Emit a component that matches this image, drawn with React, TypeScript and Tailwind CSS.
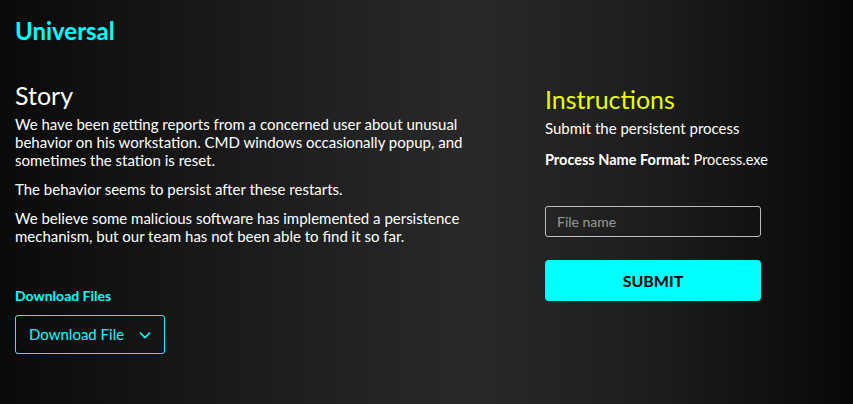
import React from "react";

const App = () => {
  return (
    <div
      className="w-[853px] h-[404px] overflow-hidden bg-[linear-gradient(90deg,#0a0a0a_0%,#1c1c1c_30%,#292929_55%,#1e1e1e_75%,#080808_100%)] text-white px-[15px] pt-[16px]"
      style={{ fontFamily: "Lato, 'Open Sans', sans-serif" }}
    >
      <h1 className="text-[24px] font-bold leading-[30px] text-[#00ffff]">Universal</h1>

      <div className="flex mt-[34px]">
        {/* story */}
        <div className="w-[530px] pr-[60px]">
          <h2 className="text-[25px] leading-[30px]">Story</h2>
          <div className="text-[15px] leading-[18px] mt-[5px]">
            <p>
              We have been getting reports from a concerned user about unusual behavior on his workstation. CMD windows
              occasionally popup, and sometimes the station is reset.
            </p>
            <p className="mt-[11px]">The behavior seems to persist after these restarts.</p>
            <p className="mt-[11px]">
              We believe some malicious software has implemented a persistence mechanism, but our team has not been
              able to find it so far.
            </p>
          </div>

          <h3 className="mt-[42px] text-[14px] font-bold text-[#00ffff] leading-[18px]">Download Files</h3>
          <button className="mt-[10px] w-[150px] h-[39px] border border-[#00ffff] rounded-[3px] flex items-center justify-between pl-[13px] pr-[11px] text-[#00ffff] text-[15px]">
            <span>Download File</span>
            <svg width="16" height="16" viewBox="0 0 24 24" fill="none" stroke="currentColor" strokeWidth="2.5" strokeLinecap="round" strokeLinejoin="round">
              <path d="M5 9l7 7 7-7" />
            </svg>
          </button>
        </div>

        {/* instructions */}
        <div className="w-[216px] pt-[4px]">
          <h2 className="text-[25px] leading-[30px] text-[#e8ff00] whitespace-nowrap">Instructions</h2>
          <p className="text-[15px] leading-[18px] mt-[5px] whitespace-nowrap">Submit the persistent process</p>
          <p className="text-[14.5px] leading-[18px] mt-[14px] whitespace-nowrap">
            <span className="font-bold">Process Name Format:</span> Process.exe
          </p>
          <input
            placeholder="File name"
            className="mt-[37px] w-[216px] h-[31px] border border-[#bdbdbd] rounded-[3px] bg-transparent px-[11px] text-[14px] text-white placeholder:text-[#9a9a9a] outline-none"
          />
          <button className="mt-[23px] w-[216px] h-[41px] bg-[#00ffff] rounded-[4px] text-black font-bold text-[16px]">
            SUBMIT
          </button>
        </div>
      </div>
    </div>
  );
};

export default App;
